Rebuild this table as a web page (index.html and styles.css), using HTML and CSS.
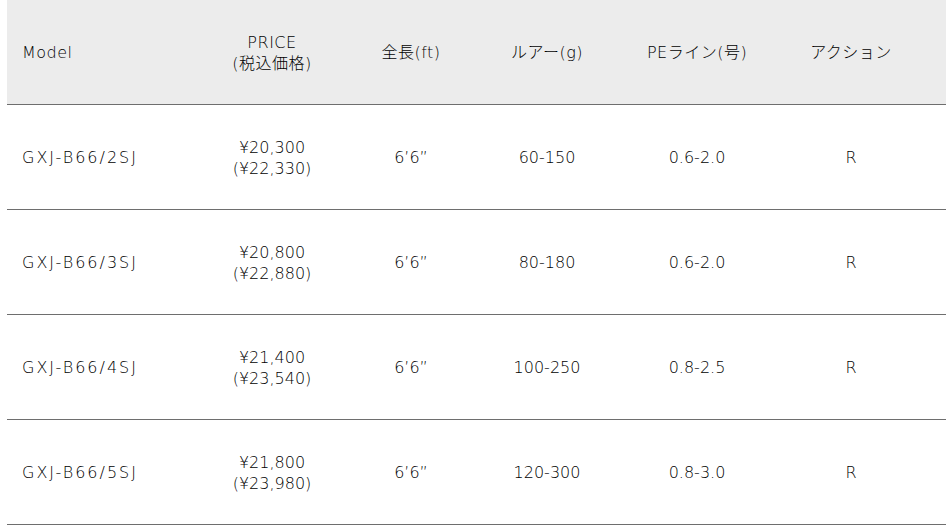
FILE: index.html
```html
<!DOCTYPE html>
<html lang="ja">
<head>
  <meta charset="UTF-8" />
  <meta name="viewport" content="width=device-width, initial-scale=1.0"/>
  <title>GXJ Spec</title>
  <link rel="stylesheet" href="styles.css">
</head>
<body>

<div class="spec-wrap">
  <table class="spec">
    <colgroup>
      <col class="c-model">
      <col class="c-price">
      <col class="c-length">
      <col class="c-lure">
      <col class="c-line">
      <col class="c-action">
      <col class="c-rest">
    </colgroup>
    <thead>
      <tr>
        <th class="left">Model</th>
        <th>PRICE<br>(税込価格)</th>
        <th>全長(ft)</th>
        <th>ルアー(g)</th>
        <th>PEライン(号)</th>
        <th>アクション</th>
        <th></th>
      </tr>
    </thead>
    <tbody>
      <tr>
        <td class="left model">GXJ-B66/2SJ</td>
        <td>¥20,300<br>(¥22,330)</td>
        <td>6’6”</td>
        <td>60-150</td>
        <td>0.6-2.0</td>
        <td>R</td>
        <td></td>
      </tr>
      <tr>
        <td class="left model">GXJ-B66/3SJ</td>
        <td>¥20,800<br>(¥22,880)</td>
        <td>6’6”</td>
        <td>80-180</td>
        <td>0.6-2.0</td>
        <td>R</td>
        <td></td>
      </tr>
      <tr>
        <td class="left model">GXJ-B66/4SJ</td>
        <td>¥21,400<br>(¥23,540)</td>
        <td>6’6”</td>
        <td>100-250</td>
        <td>0.8-2.5</td>
        <td>R</td>
        <td></td>
      </tr>
      <tr>
        <td class="left model">GXJ-B66/5SJ</td>
        <td>¥21,800<br>(¥23,980)</td>
        <td>6’6”</td>
        <td>120-300</td>
        <td>0.8-3.0</td>
        <td>R</td>
        <td></td>
      </tr>
    </tbody>
  </table>
</div>

</body>
</html>
```

FILE: styles.css
```css
body {
  margin: 0;
  background: #fff;
  color: #000;
  font-family: "DejaVu Sans", "Noto Sans CJK JP", sans-serif;
  font-size: 16px;
  font-weight: 200;
  overflow: hidden;
}
.spec-wrap {
  padding-left: 7px;
  overflow: hidden;
}
.spec {
  border-collapse: collapse;
  table-layout: fixed;
  width: 960px;
}
.c-model { width: 195px; }
.c-price { width: 140px; }
.c-length { width: 138px; }
.c-lure { width: 134px; }
.c-line { width: 166px; }
.c-action { width: 142px; }
.c-rest { width: 45px; }
.spec th,
.spec td {
  height: 103px;
  padding: 1px 0 0;
  text-align: center;
  vertical-align: middle;
  font-weight: 200;
  line-height: 21px;
  border-bottom: 1px solid #6e6e6e;
}
.spec thead th {
  background: #ececec;
  letter-spacing: 0.5px;
}
.spec .left {
  text-align: left;
  padding-left: 15px;
}
.spec .model {
  letter-spacing: 2px;
}
```
